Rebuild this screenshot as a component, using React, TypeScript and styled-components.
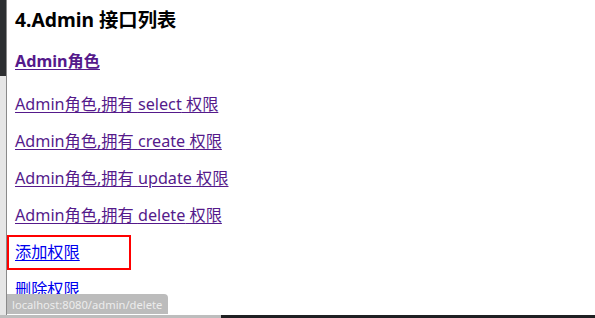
import styled, { createGlobalStyle } from "styled-components";

const GlobalStyle = createGlobalStyle`
    html, body {
        margin: 0;
        padding: 0;
        background: #ffffff;
    }
    body {
        font-family: "Noto Sans", "Noto Sans CJK SC", sans-serif;
    }
`

const Screen = styled.div`
    position: relative;
    width: 595px;
    height: 318px;
    overflow: hidden;
    display: flex;
    flex-direction: column;
`

const Body = styled.div`
    flex: 1;
    display: flex;
`

const SideStrip = styled.div`
    width: 6px;
    border-right: 1px solid #8a8a8a;
    background: linear-gradient(to bottom, #2d2f31 0px, #2d2f31 76px, #e6e6e6 76px, #e6e6e6 100%);
`

const Page = styled.div`
    flex: 1;
    display: flex;
    flex-direction: column;
    padding: 8px 0 0 8px;
`

const Title = styled.h3`
    margin: 0;
    font-size: 19.3px;
    line-height: 24px;
    font-weight: 700;
    color: #000000;
`

const RoleList = styled.div`
    display: flex;
    flex-direction: column;
    gap: 16px;
`

const RoleHeader = styled.div`
    margin: 19px 0 22px;
    font-size: 16px;
    line-height: 21px;
    font-weight: 700;
`

const Link = styled.a<{ $visited?: boolean }>`
    font-size: 16.2px;
    line-height: 21px;
    color: ${(p) => (p.$visited ? "#551a8b" : "#0000ee")};
    text-decoration: underline;
    text-underline-offset: 2px;
    cursor: pointer;
`

const Item = styled.div`
    height: 21px;
    display: flex;
    align-items: center;
`

const Highlight = styled.div`
    box-sizing: border-box;
    width: 124px;
    height: 35px;
    margin: -7px 0 -7px -8px;
    padding-left: 6px;
    border: 2px solid #ff0000;
    display: flex;
    align-items: center;
`

const StatusBubble = styled.div`
    position: absolute;
    left: 7px;
    bottom: 4px;
    height: 20px;
    padding: 0 6px 0 5px;
    display: flex;
    align-items: center;
    background: #bcbcbc;
    border-top-right-radius: 4px;
    color: #ececec;
    font-family: "Noto Sans", "Liberation Sans", sans-serif;
    font-size: 11.2px;
`

const BottomBar = styled.div`
    height: 3px;
    display: flex;
`

const BarPart = styled.div<{ $dark?: boolean; $w?: string }>`
    width: ${(p) => p.$w ?? "auto"};
    flex: ${(p) => (p.$w ? "none" : 1)};
    background: ${(p) => (p.$dark ? "#1f2022" : "#bdbdbd")};
`

const perms = ["select", "create", "update", "delete"];

export default function App() {
    return (
        <>
            <GlobalStyle />
            <Screen>
                <Body>
                    <SideStrip />
                    <Page>
                        <Title>4.Admin 接口列表</Title>
                        <RoleHeader>
                            <Link $visited>Admin角色</Link>
                        </RoleHeader>
                        <RoleList>
                            {perms.map((p) => (
                                <Item key={p}>
                                    <Link $visited>Admin角色,拥有 {p} 权限</Link>
                                </Item>
                            ))}
                            <Item>
                                <Highlight>
                                    <Link>添加权限</Link>
                                </Highlight>
                            </Item>
                            <Item>
                                <Link>删除权限</Link>
                            </Item>
                        </RoleList>
                    </Page>
                </Body>
                <BottomBar>
                    <BarPart $w="221px" />
                    <BarPart $dark />
                </BottomBar>
                <StatusBubble>localhost:8080/admin/delete</StatusBubble>
            </Screen>
        </>
    );
}
